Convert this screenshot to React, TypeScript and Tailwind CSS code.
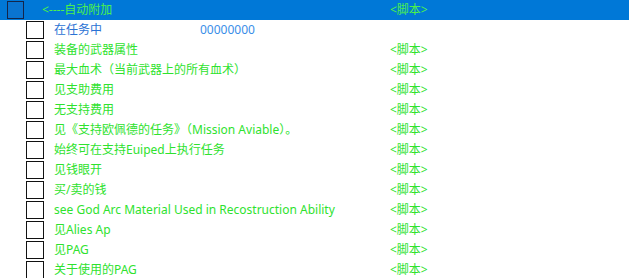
import React from 'react';

type Row = { label: string; value?: string; script?: boolean; blue?: boolean };

const rows: Row[] = [
  { label: '在任务中', value: '00000000', blue: true },
  { label: '装备的武器属性', script: true },
  { label: '最大血术（当前武器上的所有血术）', script: true },
  { label: '见支助费用', script: true },
  { label: '无支持费用', script: true },
  { label: '见《支持欧佩德的任务》（Mission Aviable）。', script: true },
  { label: '始终可在支持Euiped上执行任务', script: true },
  { label: '见钱眼开', script: true },
  { label: '买/卖的钱', script: true },
  { label: 'see God Arc Material Used in Recostruction Ability', script: true },
  { label: '见Alies Ap', script: true },
  { label: '见PAG', script: true },
  { label: '关于使用的PAG', script: true },
];

const font = { fontFamily: '"Noto Sans", "Noto Sans CJK SC", sans-serif' };

export default function App() {
  return (
    <div className="w-[629px] h-[278px] overflow-hidden bg-white text-[12px] leading-none" style={font}>
      <div className="h-5 bg-[#0078d7] flex items-center">
        <div className="ml-[7px] w-[17px] h-[18px] border border-[#14264a] bg-[#0a74d0]" />
        <span className="ml-[18px] w-[348px] text-[#4cf04c]">&lt;----自动附加</span>
        <span className="text-[#4cf04c]">&lt;脚本&gt;</span>
      </div>
      {rows.map((r, i) => (
        <div key={i} className="h-5 flex items-center">
          <div className="ml-[26px] w-[18px] h-[18px] border border-[#111] bg-white shrink-0" />
          {r.blue ? (
            <>
              <span className="ml-[10px] w-[146px] text-[#2a72d4]">{r.label}</span>
              <span className="text-[#3a8ee8]">{r.value}</span>
            </>
          ) : (
            <>
              <span className="ml-[10px] w-[336px] shrink-0 whitespace-nowrap text-[#2ee22e]">{r.label}</span>
              <span className="text-[#2ee22e]">&lt;脚本&gt;</span>
            </>
          )}
        </div>
      ))}
    </div>
  );
}
